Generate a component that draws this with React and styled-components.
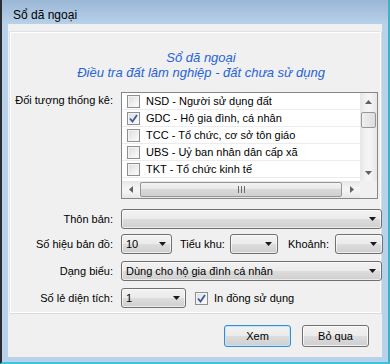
import React from "react";
import styled, { createGlobalStyle } from "styled-components";

const GlobalStyle = createGlobalStyle`
  html, body {
    margin: 0;
    padding: 0;
    background: #ffffff;
  }
  body {
    font-family: "Liberation Sans", Arial, sans-serif;
    font-size: 11px;
    color: #000000;
  }
  * {
    box-sizing: border-box;
  }
`;

const items = [
  { code: "NSD", name: "Người sử dụng đất", checked: false },
  { code: "GDC", name: "Hộ gia đình, cá nhân", checked: true },
  { code: "TCC", name: "Tổ chức, cơ sở tôn giáo", checked: false },
  { code: "UBS", name: "Uỷ ban nhân dân cấp xã", checked: false },
  { code: "TKT", name: "Tổ chức kinh tế", checked: false }
];

const CheckBox = ({ checked }) => (
  <CheckBoxStyled>
    {checked && (
      <svg width="9" height="9" viewBox="0 0 9 9">
        <path d="M1 4.5 L3.5 7.5 L8 1" fill="none" stroke="#3b5b9c" strokeWidth="1.8" />
      </svg>
    )}
  </CheckBoxStyled>
);

const Arrow = () => (
  <svg width="7" height="4" viewBox="0 0 7 4">
    <path d="M0 0 H7 L3.5 4 Z" fill="#1a1a1a" />
  </svg>
);

const Combo = ({ width, value }) => (
  <ComboStyled $width={width}>
    <span>{value}</span>
    <Arrow />
  </ComboStyled>
);

const ScrollArrow = ({ dir }) => {
  const paths = {
    up: "M0 4 L3.5 0 L7 4 Z",
    down: "M0 0 H7 L3.5 4 Z",
    left: "M4 0 V7 L0 3.5 Z",
    right: "M0 0 V7 L4 3.5 Z"
  };
  const vertical = dir === "up" || dir === "down";
  return (
    <ArrowButton>
      <svg width={vertical ? 7 : 4} height={vertical ? 4 : 7} viewBox={vertical ? "0 0 7 4" : "0 0 4 7"}>
        <path d={paths[dir]} fill="#606060" />
      </svg>
    </ArrowButton>
  );
};

const App = () => (
  <>
    <GlobalStyle />
    <Window>
      <TitleBar>Sổ dã ngoại</TitleBar>
      <Client>
        <Panel>
          <Header>
            <div>Sổ dã ngoại</div>
            <div>Điều tra đất lâm nghiệp - đất chưa sử dụng</div>
          </Header>

          <Row $mt={12} $top>
            <Label $pt={2}>Đối tượng thống kê:</Label>
            <ListBox>
              <ListItems>
                {items.map(item => (
                  <ListItem key={item.code}>
                    <CheckBox checked={item.checked} />
                    <span>
                      {item.code} - {item.name}
                    </span>
                  </ListItem>
                ))}
              </ListItems>
              <VScroll>
                <ScrollArrow dir="up" />
                <VTrack>
                  <VThumb />
                </VTrack>
                <ScrollArrow dir="down" />
              </VScroll>
              <HScroll>
                <ScrollArrow dir="left" />
                <HThumb>
                  <Grip />
                </HThumb>
                <ScrollArrow dir="right" />
              </HScroll>
              <Corner />
            </ListBox>
          </Row>

          <Row $mt={10}>
            <Label>Thôn bản:</Label>
            <Combo width={261} value="" />
          </Row>

          <Row $mt={5}>
            <Label>Số hiệu bản đồ:</Label>
            <Combo width={51} value="10" />
            <InlineLabel $ml={8} $width={50}>Tiểu khu:</InlineLabel>
            <Combo width={48} value="" />
            <InlineLabel $ml={10} $width={47}>Khoảnh:</InlineLabel>
            <Combo width={48} value="" />
          </Row>

          <Row $mt={7}>
            <Label>Dạng biểu:</Label>
            <Combo width={261} value="Dùng cho hộ gia đình cá nhân" />
          </Row>

          <Row $mt={7}>
            <Label>Số lẻ diện tích:</Label>
            <Combo width={65} value="1" />
            <CheckWrap>
              <CheckBox checked />
              <span>In đồng sử dụng</span>
            </CheckWrap>
          </Row>
        </Panel>

        <ButtonBar>
          <Button $default>Xem</Button>
          <Button>Bỏ qua</Button>
        </ButtonBar>
      </Client>
    </Window>
  </>
);

export default App;

// Styles
const Window = styled.div`
  width: 390px;
  height: 364px;
  display: flex;
  flex-direction: column;
  padding: 0 6px 5px 6px;
  background: linear-gradient(#9ab7d6 0px, #b3cce6 20px, #b9d1ea 24px, #b9d1ea 100%);
  border-left: 2px solid #2a2e33;
  border-right: 2px solid #3fb2c6;
  border-bottom: 2px solid #3cc4dc;
`;

const TitleBar = styled.div`
  height: 24px;
  padding: 8px 0 0 5px;
  font-size: 12px;
  line-height: 14px;
  color: #000000;
`;

const Client = styled.div`
  flex: 1;
  display: flex;
  flex-direction: column;
  background: #f0f0f0;
  padding: 7px 1px 0 1px;
`;

const Panel = styled.div`
  height: 282px;
  border: 1px solid #dde3e8;
  border-right-color: #ffffff;
  border-bottom-color: #ffffff;
  box-shadow: inset 1px 1px 0 #ffffff, 1px 1px 0 #d5dde3;
`;

const Header = styled.div`
  padding: 18px 0 0 12px;
  text-align: center;
  font-size: 13px;
  line-height: 15px;
  font-style: italic;
  color: #2563d8;
`;

const Row = styled.div`
  display: flex;
  align-items: ${p => (p.$top ? "flex-start" : "center")};
  margin-top: ${p => p.$mt}px;
`;

const Label = styled.div`
  width: 111px;
  flex-shrink: 0;
  padding-right: 8px;
  padding-top: ${p => p.$pt || 0}px;
  text-align: right;
  white-space: nowrap;
`;

const InlineLabel = styled.div`
  width: ${p => p.$width}px;
  margin-left: ${p => p.$ml}px;
  flex-shrink: 0;
  white-space: nowrap;
`;

const ComboStyled = styled.div`
  width: ${p => p.$width}px;
  height: 20px;
  flex-shrink: 0;
  display: flex;
  align-items: center;
  justify-content: space-between;
  padding: 0 5px 0 4px;
  border: 1px solid #707070;
  border-radius: 3px;
  background: linear-gradient(#f2f2f2 0%, #ebebeb 50%, #dddddd 50%, #cfcfcf 100%);
  box-shadow: inset 0 0 0 1px rgba(255, 255, 255, 0.6);
  white-space: nowrap;
  overflow: hidden;
`;

const ListBox = styled.div`
  width: 257px;
  height: 107px;
  display: grid;
  grid-template-columns: 1fr 17px;
  grid-template-rows: 1fr 17px;
  border: 1px solid #828790;
  background: #ffffff;
`;

const ListItems = styled.div`
  overflow: hidden;
`;

const ListItem = styled.div`
  height: 17px;
  display: flex;
  align-items: center;
  padding-left: 5px;
  gap: 6px;
  border-bottom: 1px solid #ececec;
  white-space: nowrap;
`;

const CheckBoxStyled = styled.div`
  width: 13px;
  height: 13px;
  flex-shrink: 0;
  display: flex;
  align-items: center;
  justify-content: center;
  border: 1px solid #8e8f8f;
  background: linear-gradient(135deg, #dcdcdc 0%, #f4f4f4 70%, #ffffff 100%);
  box-shadow: inset 0 0 0 1px #f4f4f4;
`;

const VScroll = styled.div`
  display: flex;
  flex-direction: column;
  background: linear-gradient(90deg, #e6e6e6, #f4f4f4 40%, #f4f4f4 60%, #e6e6e6);
`;

const VTrack = styled.div`
  flex: 1;
  padding-top: 2px;
`;

const VThumb = styled.div`
  width: 15px;
  height: 16px;
  margin-left: 1px;
  border: 1px solid #979797;
  border-radius: 2px;
  background: linear-gradient(90deg, #f0f0f0, #dcdcdc);
`;

const HScroll = styled.div`
  display: flex;
  align-items: stretch;
  background: linear-gradient(#e6e6e6, #f4f4f4 40%, #f4f4f4 60%, #e6e6e6);
`;

const HThumb = styled.div`
  flex: 1;
  margin: 1px 1px;
  display: flex;
  align-items: center;
  justify-content: center;
  border: 1px solid #979797;
  border-radius: 2px;
  background: linear-gradient(#f3f3f3 0%, #e8e8e8 50%, #d9d9d9 50%, #d0d0d0 100%);
`;

const Grip = styled.div`
  width: 7px;
  height: 7px;
  background: repeating-linear-gradient(90deg, #6a6a6a 0 1px, transparent 1px 3px);
`;

const ArrowButton = styled.div`
  width: 17px;
  height: 17px;
  flex-shrink: 0;
  display: flex;
  align-items: center;
  justify-content: center;
`;

const Corner = styled.div`
  background: #f0f0f0;
`;

const CheckWrap = styled.div`
  display: flex;
  align-items: center;
  gap: 6px;
  margin-left: 9px;
  white-space: nowrap;
`;

const ButtonBar = styled.div`
  display: flex;
  justify-content: flex-end;
  gap: 11px;
  padding: 12px 12px 0 0;
`;

const Button = styled.div`
  width: 67px;
  height: 22px;
  display: flex;
  align-items: center;
  justify-content: center;
  border: 1px solid ${p => (p.$default ? "#3c8ad0" : "#707070")};
  border-radius: 3px;
  background: linear-gradient(#f2f2f2 0%, #ebebeb 50%, #dddddd 50%, #cfcfcf 100%);
  box-shadow: inset 0 0 0 1px ${p => (p.$default ? "#bfe6f9" : "rgba(255, 255, 255, 0.7)")};
`;
